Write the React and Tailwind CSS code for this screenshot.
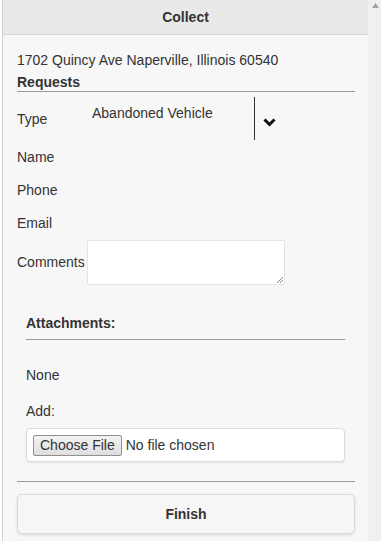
export default function App() {
  return (
    <div className="flex h-[541px] w-[381px] bg-white text-[14px] text-[#333]" style={{ fontFamily: '"Liberation Sans", Arial, sans-serif' }}>
      <div className="ml-[2px] flex w-[366px] flex-col border-l border-[#cfcfcf] bg-[#f7f7f7]">
        <div className="flex h-[35px] items-center justify-center border-b border-[#d6d6d6] bg-[#e9e9e9] font-bold">Collect</div>
        <div className="pl-[14px] pr-[13px]">
          <div className="mt-[15px] h-[20px] leading-[20px]">1702 Quincy Ave Naperville, Illinois 60540</div>
          <div className="h-[21px] pt-[3px] font-bold leading-[18px]">Requests</div>
          <div className="h-px bg-[#9a9a9a]" />
          <div className="relative h-[49px]">
            <div className="absolute left-0 top-[18px] leading-[18px]">Type</div>
            <div className="absolute left-[75px] top-[12px] leading-[18px]">Abandoned Vehicle</div>
            <div className="absolute left-[237px] top-[5px] h-[43px] w-px bg-[#333]" />
            <svg className="absolute left-[246px] top-[26px]" width="13" height="9" viewBox="0 0 13 9">
              <polyline points="1.5,1.5 6.5,6.5 11.5,1.5" fill="none" stroke="#111" strokeWidth="3" />
            </svg>
          </div>
          <div className="flex h-[33px] items-center">Name</div>
          <div className="flex h-[33px] items-center">Phone</div>
          <div className="flex h-[33px] items-center">Email</div>
          <div className="flex items-center">
            <div className="w-[70px]">Comments</div>
            <div className="relative h-[45px] w-[198px] rounded-[2px] border border-[#e3e3e3] bg-white">
              <svg className="absolute bottom-[1px] right-[1px]" width="7" height="7" viewBox="0 0 7 7">
                <line x1="1" y1="7" x2="7" y2="1" stroke="#888" strokeWidth="1" />
                <line x1="4" y1="7" x2="7" y2="4" stroke="#888" strokeWidth="1" />
              </svg>
            </div>
          </div>
          <div className="px-[9px]">
            <div className="mt-[29px] h-[18px] font-bold leading-[18px]">Attachments:</div>
            <div className="mt-[7px] h-px w-[319px] bg-[#9a9a9a]" />
            <div className="mt-[26px] h-[18px] leading-[18px]">None</div>
            <div className="mt-[18px] h-[18px] leading-[18px]">Add:</div>
            <div className="mt-[8px] flex h-[34px] w-[319px] items-center rounded-[4px] border border-[#dcdcdc] bg-white pl-[6px] shadow-[0_1px_2px_rgba(0,0,0,0.08)]">
              <div className="flex h-[21px] items-center rounded-[2px] border border-[#8f8f8f] bg-gradient-to-b from-[#f4f4f4] to-[#dedede] px-[6px] leading-[18px]">Choose File</div>
              <div className="ml-[4px] leading-[18px]">No file chosen</div>
            </div>
          </div>
          <div className="mt-[19px] h-px bg-[#9a9a9a]" />
          <div className="mt-[12px] flex h-[40px] items-center justify-center rounded-[5px] border border-[#dadada] bg-[#f6f6f6] font-bold shadow-[0_1px_3px_rgba(0,0,0,0.12)]">Finish</div>
        </div>
      </div>
      <div className="relative w-[13px] flex-1 bg-[#f0f0f0]">
        <svg className="absolute left-[4px] top-[3px]" width="7" height="5" viewBox="0 0 7 5">
          <polygon points="3.5,0 7,5 0,5" fill="#a3a3a3" />
        </svg>
      </div>
    </div>
  );
}
